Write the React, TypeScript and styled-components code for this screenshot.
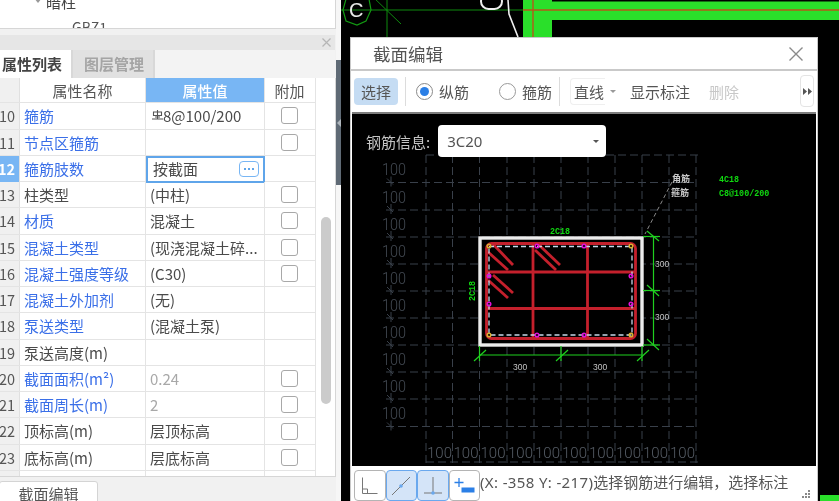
import React from "react";
import styled, { createGlobalStyle } from "styled-components";

const Global = createGlobalStyle`
  html, body { margin: 0; padding: 0; background: #000; }
  body { width: 839px; height: 501px; overflow: hidden; font-family: "Noto Sans CJK SC", "Liberation Sans", sans-serif; }
  * { box-sizing: border-box; }
`;

const Page = styled.div`
  display: flex; width: 839px; height: 501px; overflow: hidden; background: #000; filter: blur(0.3px);
`;
const LeftPanel = styled.div`
  width: 336px; height: 501px; flex: none; display: flex; flex-direction: column; background: #f1f1f1; overflow: hidden;
`;
const TreePane = styled.div`
  height: 29px; flex: none; background: #fff; border-bottom: 1px solid #d6d6d6; border-right: 1px solid #d6d6d6;
  padding-left: 34px; overflow: hidden; color: #444; font-size: 15px; line-height: 20px;
`;
const TreeRow = styled.div`
  display: flex; align-items: center; gap: 4px; margin-top: -8px; height: 20px;
`;
const Caret = styled.span`
  width: 0; height: 0; border-left: 4px solid transparent; border-right: 4px solid transparent; border-top: 5px solid #999; margin-top: -4px;
`;
const TreeChild = styled.div`
  padding-left: 38px; margin-top: 5px; font-size: 14px; line-height: 20px; color: #555;
`;
const PanelGap = styled.div`height: 6px; flex: none; background: #f1f1f1;`;
const PanelTitle = styled.div`
  height: 15px; flex: none; background: #e6e6e6; display: flex; justify-content: flex-end; align-items: center; padding-right: 4px; margin-right: 1px;
`;
const Tabs = styled.div`height: 28px; flex: none; display: flex; background: #f3f3f3; margin-right: 1px;`;
const Tab = styled.div<{ $active?: boolean }>`
  height: 28px; font-size: 15px; font-weight: 700; line-height: 27px;
  text-align: ${p => (p.$active ? "left" : "center")};
  width: ${p => (p.$active ? 73 : 82)}px;
  padding-left: 2px;
  color: ${p => (p.$active ? "#444" : "#a5a5a5")};
  background: ${p => (p.$active ? "#fff" : "#e1e1e1")};
  border-right: 2px solid #d8d8d8;
`;
const TableWrap = styled.div`
  height: 399px; flex: none; background: #fff; display: flex; border-right: 1px solid #d6d6d6; border-bottom: 1px solid #d6d6d6; overflow: hidden;
`;
const Table = styled.div`width: 316px; flex: none; overflow: hidden;`;
const ScrollTrack = styled.div`flex: 1; padding: 139px 4px 0 5px;`;
const ScrollThumb = styled.div`width: 10px; height: 187px; border-radius: 5px; background: #cbcbcb;`;
const Row = styled.div<{ $head?: boolean }>`
  display: grid; grid-template-columns: 20px 126px 119px 51px;
  height: ${p => (p.$head ? "25.3px" : "26.28px")};
  border-bottom: 1px solid #e4e4e4;
  font-size: 15px;
`;
const NumCell = styled.div<{ $active?: boolean }>`
  background: ${p => (p.$active ? "#78b6f4" : "#f0f0f0")};
  color: ${p => (p.$active ? "#fff" : "#555")};
  font-weight: ${p => (p.$active ? 700 : 400)};
  font-size: 14.5px; line-height: 25px; text-align: right; padding-right: 4px; overflow: hidden; white-space: nowrap;
  border-right: 1px solid #e0e0e0; display: flex; justify-content: flex-end;
`;
const NameCell = styled.div<{ $blue?: boolean; $head?: boolean }>`
  color: ${p => (p.$head ? "#555" : p.$blue ? "#3a6fe8" : "#4a4a4a")};
  text-align: ${p => (p.$head ? "center" : "left")};
  line-height: 25px; padding-left: ${p => (p.$head ? 0 : 4)}px; border-right: 1px solid #e4e4e4; white-space: nowrap; overflow: hidden;
`;
const ValueCell = styled.div<{ $head?: boolean; $muted?: boolean }>`
  color: ${p => (p.$head ? "#fff" : p.$muted ? "#a8a8a8" : "#4a4a4a")};
  background: ${p => (p.$head ? "#78b6f4" : "transparent")};
  text-align: ${p => (p.$head ? "center" : "left")};
  font-weight: ${p => (p.$head ? 500 : 400)};
  line-height: 25px; padding-left: ${p => (p.$head ? 0 : 4)}px; border-right: 1px solid #e4e4e4; white-space: nowrap; overflow: hidden;
`;
const RebarIcon = styled.svg`vertical-align: 2px; margin-left: 2px;`;
const EditCell = styled.div`
  border: 2px solid #5fa5ea; display: flex; align-items: center; justify-content: space-between; padding: 0 4px 1px 5px;
  color: #4a4a4a; line-height: 22px; margin-bottom: -1px; font-size: 15px;
`;
const MoreBtn = styled.span`
  width: 20px; height: 16px; border: 1px solid #78b6f4; border-radius: 4px; display: flex; align-items: center; justify-content: center; gap: 2px; background: #fff;
`;
const MoreDot = styled.i`width: 2px; height: 2px; background: #5fa5ea; display: block;`;
const AddCell = styled.div`
  display: flex; align-items: center; justify-content: center; color: #555; font-size: 15px; padding-right: 1px; border-right: 1px solid #e4e4e4;
`;
const Check = styled.span`
  width: 17px; height: 17px; border: 1.5px solid #a8a8a8; border-radius: 3px; background: #fff; display: block;
`;
const Footer = styled.div`flex: 1; padding-top: 4px;`;
const FootBtn = styled.div`
  width: 99px; height: 24px; background: #fff; border: 1px solid #d4d4d4; border-radius: 3px; margin-left: -1px;
  font-size: 15px; color: #555; text-align: center; line-height: 24px;
`;

const Divider = styled.div`width: 5px; flex: none; background: #f6f6f6; padding-top: 60px;`;
const DividerHandle = styled.div`
  height: 125px; background: #5f6a75; display: flex; align-items: center; justify-content: center;
`;
const HandleArrow = styled.span`
  width: 0; height: 0; border-top: 4px solid transparent; border-bottom: 4px solid transparent; border-right: 4px solid #aeb5bc;
`;

const Cad = styled.div`flex: 1; position: relative; overflow: hidden;`;
const CadSvg = styled.svg`position: absolute; inset: 0; display: block;`;
const Dialog = styled.div`
  position: absolute; left: 9px; top: 37px; width: 468px; height: 464px; background: #fff;
  display: flex; flex-direction: column; border: 1px solid #c9c9c9; border-bottom: none;
`;
const DialogHead = styled.div`
  height: 33px; flex: none; display: flex; align-items: center; justify-content: space-between; padding: 0 14px 0 22px;
  font-size: 17.5px; color: #555; background: #fff; border-bottom: 2px solid #c9c9c9;
`;
const Toolbar = styled.div`
  height: 43px; flex: none; display: flex; align-items: center; background: #fff; margin: 0 1px; border-bottom: 2px solid #7d7d7d; padding-left: 2px; font-size: 15px; color: #555; position: relative;
`;
const ToolSelect = styled.div`
  width: 44px; height: 27px; border-radius: 4px; background: #c5dcf3; text-align: center; line-height: 27px; color: #555; flex: none;
`;
const ToolSep = styled.div<{ $gap: number }>`width: 1px; height: 29px; background: #dcdcdc; flex: none; margin-left: ${p => p.$gap}px;`;
const Radio = styled.span<{ $on?: boolean; $gap: number }>`
  width: 17px; height: 17px; border-radius: 50%; border: 1.5px solid ${p => (p.$on ? "#8a8a8a" : "#9a9a9a")}; flex: none; display: flex; align-items: center; justify-content: center; margin-left: ${p => p.$gap}px;
  &::after { content: ""; width: 9px; height: 9px; border-radius: 50%; background: ${p => (p.$on ? "#2b7fe6" : "transparent")}; }
`;
const ToolLabel = styled.span<{ $gap: number; $muted?: boolean }>`
  margin-left: ${p => p.$gap}px; flex: none; color: ${p => (p.$muted ? "#c8c8c8" : "#555")}; white-space: nowrap;
`;
const ToolCombo = styled.div`
  width: 35px; height: 27px; margin-left: 10px; flex: none; padding-left: 3px; line-height: 26px; border: 1px solid #efefef; border-right: none; border-radius: 4px 0 0 4px; white-space: nowrap;
`;
const SmallCaret = styled.span<{ $gap: number; $color?: string }>`
  width: 0; height: 0; border-left: 3px solid transparent; border-right: 3px solid transparent; border-top: 3.5px solid ${p => p.$color || "#999"}; margin-left: ${p => p.$gap}px; flex: none;
`;
const Overflow = styled.div`
  position: absolute; left: 448px; top: 4px; width: 14px; height: 32px; border: 1px solid #e4e4e4; border-radius: 4px; display: flex; align-items: center; justify-content: center;
`;
const Canvas = styled.div`flex: 1; position: relative; background: #000; margin: 0 1px; overflow: hidden;`;
const CanvasSvg = styled.svg`position: absolute; inset: 0; display: block;`;
const InfoRow = styled.div`
  position: relative; display: flex; align-items: center; gap: 8px; padding: 11px 0 0 14px; color: #c4c4c4; font-size: 15px;
`;
const InfoSelect = styled.div`
  width: 168px; height: 32px; background: #fff; border-radius: 4px; display: flex; align-items: center; justify-content: space-between; padding: 0 7px 0 9px; color: #555; font-size: 15px; font-family: "Noto Sans", sans-serif;
`;
const StatusBar = styled.div`
  height: 35px; flex: none; display: flex; align-items: flex-start; background: #fff; margin: 0 1px; padding: 4px 0 0 2px; position: relative;
`;
const IconBtn = styled.div<{ $on?: boolean }>`
  width: 31.5px; height: 31px; flex: none; border-radius: 4px; border: 1.5px solid ${p => (p.$on ? "#6aa8ee" : "#b4b4b4")}; background: ${p => (p.$on ? "#d4e4f8" : "#fff")}; display: flex; align-items: center; justify-content: center;
`;
const StatusText = styled.div`
  font-size: 15px; color: #555; line-height: 24px; white-space: nowrap; margin-left: 0; font-family: "Noto Sans", "Noto Sans CJK SC", sans-serif;
`;
const Coords = styled.span`letter-spacing: 0.36px;`;
const Grip = styled.svg`position: absolute; right: 5px; bottom: 2px;`;

const rows: { n: number; name: string; blue?: boolean; value?: string; muted?: boolean; check?: boolean; edit?: boolean }[] = [
  { n: 10, name: "箍筋", blue: true, check: true },
  { n: 11, name: "节点区箍筋", blue: true, value: "", check: true },
  { n: 12, name: "箍筋肢数", blue: true, edit: true },
  { n: 13, name: "柱类型", value: "(中柱)", check: true },
  { n: 14, name: "材质", blue: true, value: "混凝土", check: true },
  { n: 15, name: "混凝土类型", blue: true, value: "(现浇混凝土碎...", check: true },
  { n: 16, name: "混凝土强度等级", blue: true, value: "(C30)", check: true },
  { n: 17, name: "混凝土外加剂", blue: true, value: "(无)" },
  { n: 18, name: "泵送类型", blue: true, value: "(混凝土泵)" },
  { n: 19, name: "泵送高度(m)", value: "" },
  { n: 20, name: "截面面积(m²)", blue: true, value: "0.24", muted: true, check: true },
  { n: 21, name: "截面周长(m)", blue: true, value: "2", muted: true, check: true },
  { n: 22, name: "顶标高(m)", value: "层顶标高", check: true },
  { n: 23, name: "底标高(m)", value: "层底标高", check: true },
  { n: 24, name: "", value: "" },
];

const GRID = "#39404a";
const hs = [155, 182.5, 210, 237, 264, 291, 318, 345, 372, 399, 426.5];
const vs = [426, 452.5, 479.5, 507, 534, 561, 588, 615, 642, 669, 696];

function Section() {
  const mag = [[537,246],[584,246],[537,335],[584,335],[489,276],[489,304],[631,276],[631,304]];
  const yel = [[489,246],[631,246],[489,335],[631,335]];
  const hooks = [[488,252,508,270],[492,243,513,265],[535,250,556,270],[538,244,560,265],[488,280,508,298],[493,275,513,293]];
  return (
    <g>
      {hs.map(y => <line key={y} x1={y === 155 ? 426 : 386} x2={698} y1={y} y2={y} stroke={GRID} strokeWidth={1} strokeDasharray="8 4" />)}
      <line x1={426} x2={698} y1={462} y2={462} stroke={GRID} strokeDasharray="8 4" />
      {vs.map(x => <line key={x} x1={x} x2={x} y1={155} y2={466} stroke={GRID} strokeWidth={1} strokeDasharray="8 4" />)}
      {hs.slice(1).map(y => <path key={y} d={`M391 ${y - 6}V${y + 4}M387 ${y - 4}L393 ${y + 2}`} stroke={GRID} fill="none" />)}
      {hs.slice(1, 11).map(y => <text key={y} x={382} y={y - 7.5} fontFamily="Roboto, sans-serif" fontWeight={300} fontSize={16} fill="#434a53" textLength={24} lengthAdjust="spacingAndGlyphs">100</text>)}
      {vs.slice(0, 10).map(x => <text key={x} x={x + 1} y={458} fontFamily="Roboto, sans-serif" fontWeight={300} fontSize={15.5} fill="#565d66" textLength={25} lengthAdjust="spacingAndGlyphs">100</text>)}
      <rect x={480} y={238} width={162} height={107} fill="#000" stroke="#ececec" strokeWidth={3.4} />
      <g stroke="#c4202c" strokeWidth={2.8} fill="none">
        <rect x={486.5} y={243.5} width={149} height={95} rx={5} />
        <line x1={533} x2={533} y1={243} y2={338} />
        <line x1={587.5} x2={587.5} y1={243} y2={338} />
        <line x1={487} x2={635} y1={272} y2={272} />
        <line x1={487} x2={635} y1={308.5} y2={308.5} />
        {hooks.map((h, i) => <line key={i} x1={h[0]} y1={h[1]} x2={h[2]} y2={h[3]} />)}
      </g>
      <rect x={489} y={246.5} width={143} height={88.5} fill="none" stroke="#c6d6e8" strokeWidth={1.3} strokeDasharray="5 3" />
      {mag.map((p, i) => <circle key={i} cx={p[0]} cy={p[1]} r={1.8} fill="none" stroke="#e010d8" strokeWidth={1.5} />)}
      {yel.map((p, i) => <circle key={i} cx={p[0]} cy={p[1]} r={1.8} fill="none" stroke="#d8b030" strokeWidth={1.5} />)}
      <g stroke="#1fd01f" strokeWidth={1.2} fill="none">
        <line x1={479} x2={642} y1={355} y2={355} />
        <line x1={479.5} x2={479.5} y1={346} y2={361} />
        <line x1={561} x2={561} y1={346} y2={361} />
        <line x1={642} x2={642} y1={346} y2={361} />
        <line x1={474} x2={486} y1={361} y2={350} />
        <line x1={556} x2={568} y1={361} y2={350} />
        <line x1={637} x2={649} y1={361} y2={350} />
        <line x1={643} x2={660} y1={236.5} y2={236.5} />
        <line x1={643} x2={660} y1={290.5} y2={290.5} />
        <line x1={643} x2={660} y1={345} y2={345} />
        <line x1={653.5} x2={653.5} y1={236} y2={346} />
        <line x1={647} x2={659} y1={231} y2={241} />
        <line x1={647} x2={659} y1={285} y2={296} />
        <line x1={647} x2={659} y1={339} y2={350} />
      </g>
      <g fontFamily="Liberation Sans, sans-serif" fontSize={8.5} fill="#c4c4c4">
        <text x={513} y={370}>300</text>
        <text x={593} y={370}>300</text>
        <text x={655} y={267}>300</text>
        <text x={655} y={320}>300</text>
      </g>
      <g fontFamily="Liberation Mono, monospace" fontSize={8.4} fontWeight={700} fill="#10d810">
        <text x={550} y={234}>2C18</text>
        <text transform="translate(475 301) rotate(-90)">2C18</text>
        <text x={719} y={182}>4C18</text>
        <text x={719} y={195.5}>C8@100/200</text>
      </g>
      <g fontFamily="Noto Sans CJK SC, sans-serif" fontSize={9} fontWeight={700} fill="#c8c8c8">
        <text x={672} y={182}>角筋</text>
        <text x={671} y={196}>箍筋</text>
      </g>
      <line x1={672} y1={182} x2={645} y2={234} stroke="#8a8a8a" strokeDasharray="4 3" />
    </g>
  );
}

export default function App() {
  return (
    <Page>
      <Global />
      <LeftPanel>
        <TreePane>
          <TreeRow><Caret />暗柱</TreeRow>
          <TreeChild>GBZ1</TreeChild>
        </TreePane>
        <PanelGap />
        <PanelTitle>
          <svg width="9" height="9" viewBox="0 0 9 9"><path d="M0.5 0.5 8.5 8.5M8.5 0.5 0.5 8.5" stroke="#b5b5b5" strokeWidth="1.2" /></svg>
        </PanelTitle>
        <Tabs>
          <Tab $active>属性列表</Tab>
          <Tab>图层管理</Tab>
        </Tabs>
        <TableWrap>
          <Table>
            <Row $head>
              <NumCell />
              <NameCell $head>属性名称</NameCell>
              <ValueCell $head>属性值</ValueCell>
              <AddCell>附加</AddCell>
            </Row>
            {rows.map(r => (
              <Row key={r.n}>
                <NumCell $active={r.edit}>{r.n}</NumCell>
                <NameCell $blue={r.blue}>{r.name}</NameCell>
                {r.edit ? (
                  <EditCell>按截面<MoreBtn><MoreDot /><MoreDot /><MoreDot /></MoreBtn></EditCell>
                ) : r.n === 10 ? (
                  <ValueCell>
                    <RebarIcon width="11" height="10" viewBox="0 0 11 10">
                      <path d="M1.5 2v3.5h8V2zM5.5 0v9M0 9h11M3 7h5" fill="none" stroke="#555" strokeWidth="1.1" />
                    </RebarIcon>
                    8@100/200
                  </ValueCell>
                ) : (
                  <ValueCell $muted={r.muted}>{r.value}</ValueCell>
                )}
                <AddCell>{r.check && <Check />}</AddCell>
              </Row>
            ))}
          </Table>
          <ScrollTrack><ScrollThumb /></ScrollTrack>
        </TableWrap>
        <Footer><FootBtn>截面编辑</FootBtn></Footer>
      </LeftPanel>
      <Divider><DividerHandle><HandleArrow /></DividerHandle></Divider>
      <Cad>
        <CadSvg width="498" height="501" viewBox="341 0 498 501">
          <rect x="341" y="0" width="498" height="501" fill="#000" />
          <path d="M523 0H552V1.5H839V20H552V40H523Z" fill="#2adf2a" />
          <rect x="820" y="495" width="19" height="6" fill="#2adf2a" />
          <line x1="341" x2="523" y1="10" y2="10" stroke="#0f8a0f" />
          <line x1="523" x2="839" y1="10" y2="10" stroke="#b8561a" strokeWidth="1.4" />
          <line x1="533" x2="533" y1="0" y2="37" stroke="#b8561a" strokeWidth="1.4" />
          <polygon points="357,-6 369,-1 371,10 366,21 357,25 346,21 343,10 346,-1" fill="none" stroke="#129a12" strokeWidth="1.2" />
          <text x="349" y="17" fontFamily="Liberation Sans, sans-serif" fontSize="20" fill="#e8e8e8">C</text>
          <line x1="387" x2="387" y1="0" y2="37" stroke="#0f8a0f" />
          <line x1="372" x2="401" y1="-4" y2="24" stroke="#0f8a0f" />
          <rect x="481" y="-6" width="21" height="15" rx="7.5" fill="none" stroke="#f0f0f0" strokeWidth="2" />
          <path d="M508 0 509 14 518 37" fill="none" stroke="#f0f0f0" strokeWidth="1.6" />
        </CadSvg>
        <Dialog>
          <DialogHead>
            截面编辑
            <svg width="14" height="14" viewBox="0 0 14 14"><path d="M0.5 0.5 13.5 13.5M13.5 0.5 0.5 13.5" stroke="#8a8a8a" strokeWidth="1.4" /></svg>
          </DialogHead>
          <Toolbar>
            <ToolSelect>选择</ToolSelect>
            <ToolSep $gap={7} />
            <Radio $on $gap={10} />
            <ToolLabel $gap={6}>纵筋</ToolLabel>
            <Radio $gap={30} />
            <ToolLabel $gap={6}>箍筋</ToolLabel>
            <ToolSep $gap={7} />
            <ToolCombo>直线</ToolCombo>
            <SmallCaret $gap={5} />
            <ToolLabel $gap={14}>显示标注</ToolLabel>
            <ToolLabel $gap={19} $muted>删除</ToolLabel>
            <Overflow>
              <svg width="9" height="7" viewBox="0 0 9 7"><path d="M0 0 4 3.5 0 7ZM5 0 9 3.5 5 7Z" fill="#555" /></svg>
            </Overflow>
          </Toolbar>
          <Canvas>
            <CanvasSvg width="464" height="352" viewBox="352 114 464 352"><Section /></CanvasSvg>
            <InfoRow>
              钢筋信息:
              <InfoSelect>3C20<SmallCaret $gap={0} $color="#555" /></InfoSelect>
            </InfoRow>
          </Canvas>
          <StatusBar>
            <IconBtn>
              <svg width="18" height="18" viewBox="0 0 18 18" fill="none" stroke="#777" strokeWidth="1"><path d="M1.5 0.5V16.5H16.5M1.5 12H6.5V16.5" /></svg>
            </IconBtn>
            <IconBtn $on>
              <svg width="20" height="20" viewBox="0 0 20 20" fill="none" stroke="#777" strokeWidth="1"><path d="M1 19 19 1" /><circle cx="10" cy="10" r="1.8" fill="#6aa8ee" stroke="none" /></svg>
            </IconBtn>
            <IconBtn $on>
              <svg width="20" height="20" viewBox="0 0 20 20" fill="none" stroke="#777" strokeWidth="1"><path d="M10 1V17M1 17H19" /><circle cx="10" cy="17" r="1.8" fill="#6aa8ee" stroke="none" /></svg>
            </IconBtn>
            <IconBtn>
              <svg width="22" height="20" viewBox="0 0 22 20" fill="none"><path d="M6 2V11M1.5 6.5H10.5" stroke="#2b7fe6" strokeWidth="1.3" /><rect x="8.5" y="11.5" width="13" height="5" fill="#2b7fe6" /></svg>
            </IconBtn>
            <StatusText><Coords>(X: -358 Y: -217)</Coords>选择钢筋进行编辑，选择标注</StatusText>
            <Grip width="9" height="9" viewBox="0 0 9 9" fill="#888">
              <rect x="6" y="0" width="2" height="2" /><rect x="3" y="3" width="2" height="2" /><rect x="6" y="3" width="2" height="2" /><rect x="0" y="6" width="2" height="2" /><rect x="3" y="6" width="2" height="2" /><rect x="6" y="6" width="2" height="2" />
            </Grip>
          </StatusBar>
        </Dialog>
      </Cad>
    </Page>
  );
}
